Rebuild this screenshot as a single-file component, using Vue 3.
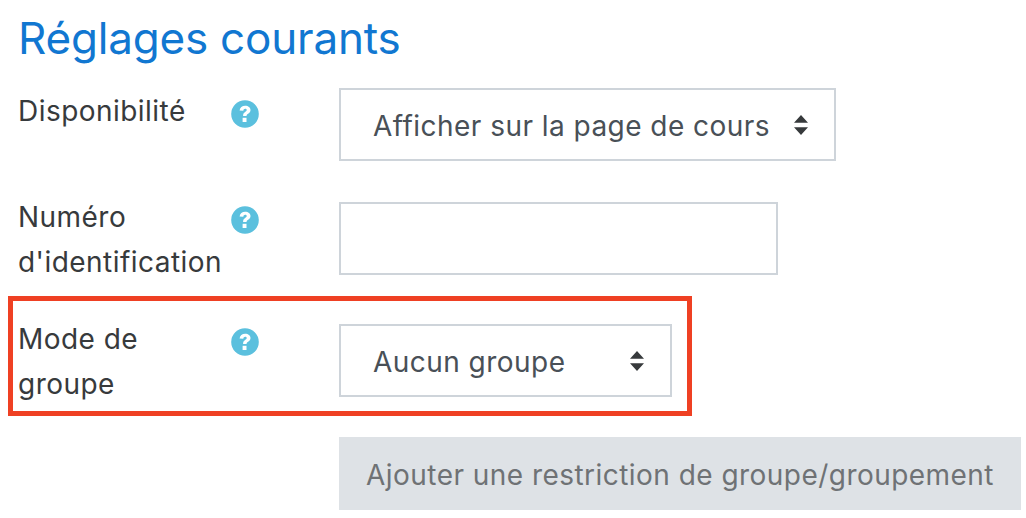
<template>
  <div class="page">
    <h2 class="title">Réglages courants</h2>

    <div class="row first">
      <label class="lbl">Disponibilité</label>
      <span class="help"><svg viewBox="0 0 28 28" width="28" height="28"><circle cx="14" cy="14" r="13.8" fill="#5bc0de"/><path d="M8.600 10.600c.3-3.100 2.500-4.900 5.600-4.900 3 0 5.300 1.700 5.300 4.300 0 1.800-1 2.800-2.400 3.700-1.200.7-1.500 1.100-1.500 2.200h-3.500c-.1-2 .6-3.100 2.100-4 1-.6 1.500-1.100 1.500-1.800 0-.8-.6-1.300-1.500-1.300-1 0-1.700.7-1.900 1.900z" fill="#fff"/><rect x="11.600" y="17.800" width="3.900" height="4.200" fill="#fff"/></svg></span>
      <div class="select wide">
        <span>Afficher sur la page de cours</span>
        <svg class="arrows" viewBox="0 0 14 20" width="14" height="20"><path d="M7 0l7 7.800H0zM7 20l7-7.800H0z" fill="#373a3c"/></svg>
      </div>
    </div>

    <div class="row second">
      <label class="lbl">Numéro d'identification</label>
      <span class="help"><svg viewBox="0 0 28 28" width="28" height="28"><circle cx="14" cy="14" r="13.8" fill="#5bc0de"/><path d="M8.600 10.600c.3-3.100 2.500-4.900 5.600-4.900 3 0 5.300 1.700 5.300 4.300 0 1.800-1 2.800-2.400 3.700-1.200.7-1.500 1.100-1.500 2.200h-3.500c-.1-2 .6-3.100 2.100-4 1-.6 1.500-1.100 1.500-1.800 0-.8-.6-1.300-1.500-1.300-1 0-1.700.7-1.900 1.900z" fill="#fff"/><rect x="11.600" y="17.800" width="3.900" height="4.200" fill="#fff"/></svg></span>
      <input class="field" type="text">
    </div>

    <div class="row marked">
      <label class="lbl">Mode de<br>groupe</label>
      <span class="help"><svg viewBox="0 0 28 28" width="28" height="28"><circle cx="14" cy="14" r="13.8" fill="#5bc0de"/><path d="M8.600 10.600c.3-3.100 2.500-4.900 5.600-4.900 3 0 5.300 1.700 5.300 4.300 0 1.800-1 2.800-2.400 3.700-1.200.7-1.500 1.100-1.500 2.200h-3.500c-.1-2 .6-3.100 2.100-4 1-.6 1.500-1.100 1.500-1.800 0-.8-.6-1.300-1.500-1.300-1 0-1.700.7-1.900 1.900z" fill="#fff"/><rect x="11.600" y="17.800" width="3.900" height="4.200" fill="#fff"/></svg></span>
      <div class="select narrow">
        <span>Aucun groupe</span>
        <svg class="arrows" viewBox="0 0 14 20" width="14" height="20"><path d="M7 0l7 7.800H0zM7 20l7-7.800H0z" fill="#373a3c"/></svg>
      </div>
    </div>

    <div class="actions">
      <button class="btn" disabled>Ajouter une restriction de groupe/groupement</button>
    </div>
  </div>
</template>

<script setup>
</script>

<style>
html, body {
  margin: 0;
  background: #fff;
  overflow: hidden;
}
</style>

<style scoped>
.page {
  width: 1026px;
  height: 518px;
  box-sizing: border-box;
  padding: 11px 5px 0 8px;
  font-family: Inter, "Liberation Sans", Arial, sans-serif;
  font-size: 28px;
  letter-spacing: 0.46px;
  color: #373a3c;
}
.title {
  margin: 0 0 23px 10px;
  height: 54px;
  font-size: 44px;
  line-height: 54px;
  font-weight: 400;
  letter-spacing: -0.2px;
  color: #1177d1;
}
.row {
  display: grid;
  grid-template-columns: 213px 108px 1fr;
  align-items: start;
  padding-left: 10px;
}
.first {
  margin-bottom: 34px;
}
.first .lbl {
  margin-top: 1px;
}
.second {
  margin-bottom: 11px;
}
.second .help {
  margin-top: 11px;
}
.second .field {
  margin-top: 7px;
}
.marked {
  margin-bottom: 21px;
  padding: 15px 0 0 5px;
  border: 5px solid #ef4023;
  width: 684px;
  box-sizing: border-box;
  height: 120px;
}
.marked .lbl {
  margin-top: 1px;
}
.marked .select {
  margin-top: 8px;
}
.lbl {
  line-height: 45px;
}
.help {
  display: block;
  margin-top: 12px;
  height: 28px;
}
.select {
  height: 73px;
  box-sizing: border-box;
  border: 2px solid #ced4da;
  display: flex;
  align-items: center;
  justify-content: space-between;
  padding: 3px 26px 0 32px;
  color: #495057;
}
.wide {
  width: 497px;
}
.narrow {
  width: 333px;
}
.field {
  display: block;
  width: 439px;
  height: 73px;
  box-sizing: border-box;
  border: 2px solid #ced4da;
  background: #fff;
  padding: 0;
}
.arrows {
  display: block;
  flex: none;
  margin-top: -3px;
}
.actions {
  padding-left: 331px;
}
.btn {
  display: block;
  width: 682px;
  height: 73px;
  border: 0;
  background: #dee2e6;
  color: #6f7275;
  font: inherit;
  letter-spacing: inherit;
  padding: 2px 0 0;
  text-align: center;
}
</style>
